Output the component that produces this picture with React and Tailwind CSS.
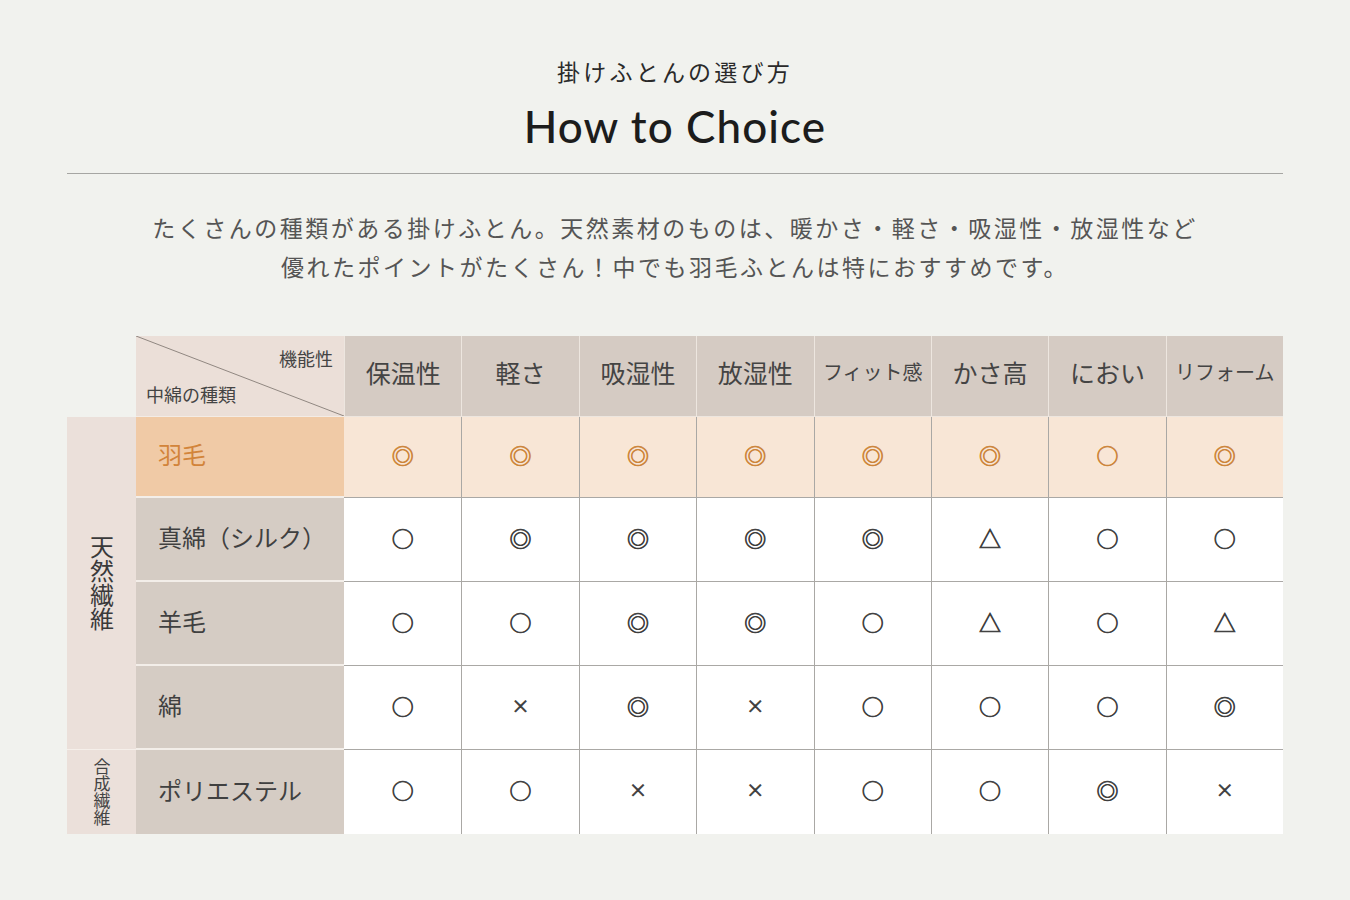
import React from 'react';

const jp = '"Noto Sans CJK JP", "Noto Sans", sans-serif';

const headers = [
  { label: '保温性', size: 'text-[25px]' },
  { label: '軽さ', size: 'text-[25px]' },
  { label: '吸湿性', size: 'text-[25px]' },
  { label: '放湿性', size: 'text-[25px]' },
  { label: 'フィット感', size: 'text-[20px]' },
  { label: 'かさ高', size: 'text-[25px]' },
  { label: 'におい', size: 'text-[25px]' },
  { label: 'リフォーム', size: 'text-[20px]' },
];

const rows = [
  { name: '羽毛', marks: ['◎', '◎', '◎', '◎', '◎', '◎', '○', '◎'], hot: true },
  { name: '真綿（シルク）', marks: ['○', '◎', '◎', '◎', '◎', '△', '○', '○'] },
  { name: '羊毛', marks: ['○', '○', '◎', '◎', '○', '△', '○', '△'] },
  { name: '綿', marks: ['○', '×', '◎', '×', '○', '○', '○', '◎'] },
  { name: 'ポリエステル', marks: ['○', '○', '×', '×', '○', '○', '◎', '×'] },
];

const Mark = ({ m, hot }) => (
  <span
    className={`${m === '×' ? 'text-[18px]' : 'text-[22px]'} leading-none [-webkit-text-stroke:0.7px] ${
      hot ? 'text-[#cc8439]' : 'text-[#3c3c3c]'
    }`}
  >
    {m}
  </span>
);

const App = () => {
  return (
    <div className="min-h-[900px] bg-[#f1f2ee] text-[#3f3f3f]" style={{ fontFamily: jp }}>
      <div className="mx-auto w-[1216px] pt-[54px]">
        {/* heading */}
        <p className="text-center text-[23px] tracking-[0.14em] leading-[34px] text-[#2a2a2a]">掛けふとんの選び方</p>
        <h1
          className="mt-[10px] text-center text-[44px] font-medium leading-[56px] tracking-[0.025em] text-[#1c1c1c]"
          style={{ fontFamily: 'Lato, "Noto Sans", sans-serif' }}
        >
          How to Choice
        </h1>
        <div className="mt-[19px] h-px bg-[#a6a6a3]" />

        <div className="mt-[34px] text-center text-[23px] leading-[39px] tracking-[2.5px] text-[#555]">
          <p>たくさんの種類がある掛けふとん。天然素材のものは、暖かさ・軽さ・吸湿性・放湿性など</p>
          <p>優れたポイントがたくさん！中でも羽毛ふとんは特におすすめです。</p>
        </div>

        {/* table */}
        <div className="mt-[50px] grid grid-cols-[69px_208px_repeat(8,1fr)] grid-rows-[81px_81px_84px_84px_84px_84px]">
          {/* header */}
          <div />
          <div className="relative bg-[#ebdfd8] border-b border-[#f3ece6]">
            <svg className="absolute inset-0 h-full w-full" viewBox="0 0 208 81" preserveAspectRatio="none">
              <line x1="0" y1="0" x2="208" y2="81" stroke="#8f8680" strokeWidth="1" />
            </svg>
            <span className="absolute right-[11px] top-[10px] text-[18px] leading-[24px] text-[#444]">機能性</span>
            <span className="absolute left-[10px] bottom-[10px] text-[18px] leading-[24px] text-[#444]">中綿の種類</span>
          </div>
          {headers.map((h) => (
            <div
              key={h.label}
              className={`flex items-center justify-center pb-[8px] bg-[#d5cbc3] border-l border-b border-[#ede6df] ${h.size} leading-none text-[#444]`}
            >
              {h.label}
            </div>
          ))}

          {/* group column */}
          <div className="row-span-4 flex items-center justify-center bg-[#ebe0da] border-b border-[#f5efea]">
            <span className="[writing-mode:vertical-rl] text-[24px] leading-[26px] text-[#3a3a3a]">天然繊維</span>
          </div>

          {rows.map((r, i) => (
            <React.Fragment key={r.name}>
              {i === 4 && (
                <div className="flex items-center justify-center bg-[#ebe0da]">
                  <span className="[writing-mode:vertical-rl] text-[17px] leading-[18px] text-[#444]">合成繊維</span>
                </div>
              )}
              <div
                className={`flex items-center pl-[22px] pb-[5px] text-[24px] ${
                  r.hot ? 'bg-[#f0caa6] text-[#d2843a]' : 'bg-[#d5ccc4] text-[#404040]'
                } ${i < 4 ? 'border-b-2 border-[#f3eee9]' : ''}`}
              >
                {r.name}
              </div>
              {r.marks.map((m, j) => (
                <div
                  key={j}
                  className={`flex items-center justify-center pb-[6px] ${r.hot ? 'bg-[#f8e6d6]' : 'bg-white'} ${
                    j > 0 ? 'border-l border-[#aaa8a5]' : ''
                  } ${i < 4 ? 'border-b border-[#aaa8a5]' : ''}`}
                >
                  <Mark m={m} hot={r.hot} />
                </div>
              ))}
            </React.Fragment>
          ))}
        </div>
      </div>
    </div>
  );
};

export default App;
